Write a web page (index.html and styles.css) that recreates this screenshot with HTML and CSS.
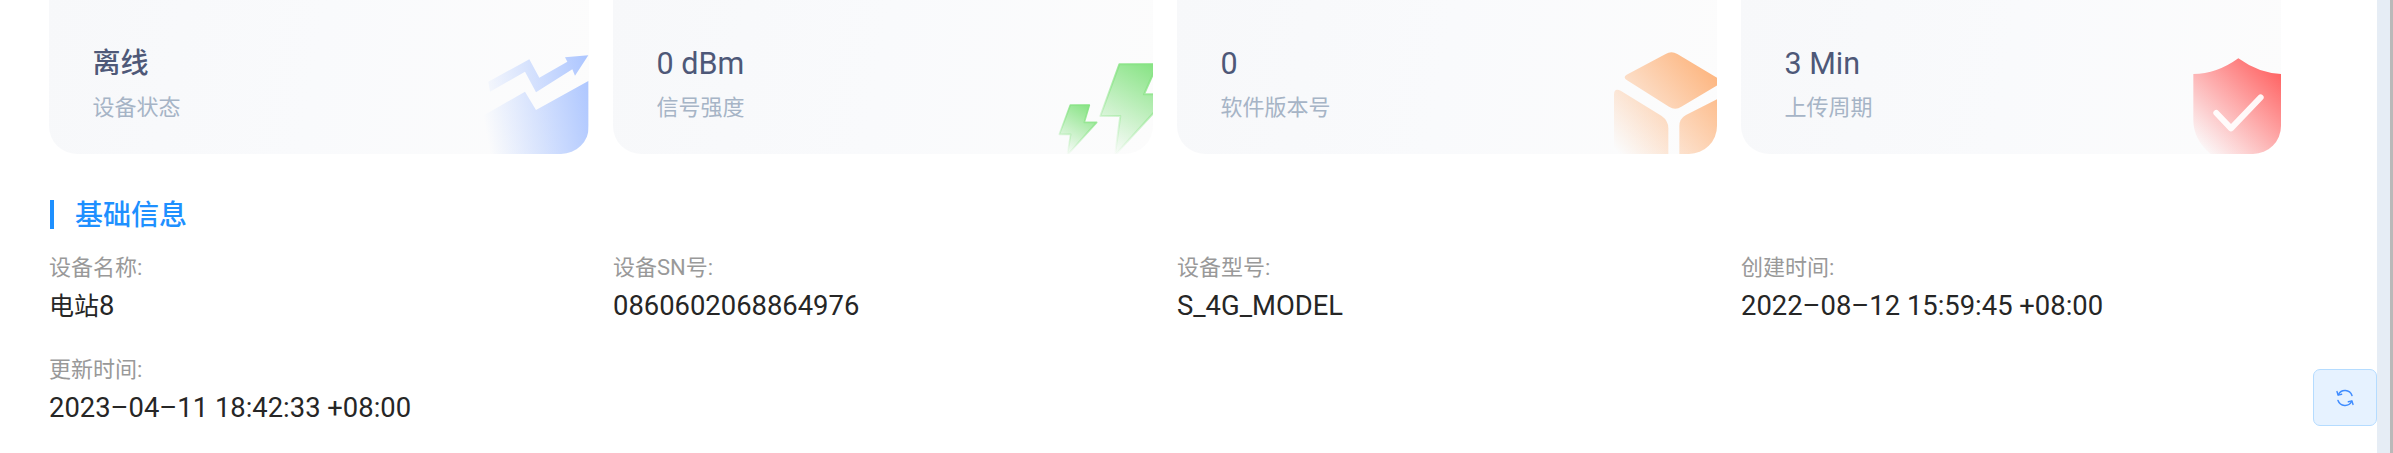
FILE: index.html
```html
<!DOCTYPE html>
<html lang="zh-CN">
<head>
<meta charset="utf-8">
<title>设备详情</title>
<link rel="stylesheet" href="styles.css">
</head>
<body>
<div class="page">
  <main class="content">
    <section class="cards">
      <article class="card">
        <div class="card-value cjk">离线</div>
        <div class="card-label">设备状态</div>
        <svg class="deco deco-trend" viewBox="0 0 420 390" aria-hidden="true">
          <defs><linearGradient id="gb" gradientUnits="userSpaceOnUse" x1="70" y1="260" x2="400" y2="200"><stop offset="0" stop-color="#adc6ff" stop-opacity="0"/><stop offset="1" stop-color="#adc6ff"/></linearGradient></defs>
          <path fill="url(#gb)" d="M85 155 208 88 238 143 322 95 315 82 385 76 345 137 337 118 228 187 195 125 90 185Z"/>
          <path fill="url(#gb)" d="M68 258 195 185 228 240 385 153V372H68Z"/>
        </svg>
      </article>
      <article class="card">
        <div class="card-value">0 dBm</div>
        <div class="card-label">信号强度</div>
        <svg class="deco deco-bolt" viewBox="0 0 420 330" aria-hidden="true">
          <defs>
            <linearGradient id="gg1" gradientUnits="userSpaceOnUse" x1="345" y1="45" x2="195" y2="300"><stop offset="0" stop-color="#86e383"/><stop offset="1" stop-color="#86e383" stop-opacity="0"/></linearGradient>
            <linearGradient id="gg2" gradientUnits="userSpaceOnUse" x1="150" y1="165" x2="70" y2="310"><stop offset="0" stop-color="#86e383"/><stop offset="1" stop-color="#86e383" stop-opacity="0"/></linearGradient>
          </defs>
          <path fill="url(#gg1)" stroke="url(#gg1)" stroke-width="6" stroke-linejoin="round" d="M238 43H352L312 133H392L225 315 241 198H181Z"/>
          <path fill="url(#gg2)" stroke="url(#gg2)" stroke-width="5" stroke-linejoin="round" d="M91 165H148L133 217H170L82 315 92 253H58Z"/>
        </svg>
      </article>
      <article class="card">
        <div class="card-value">0</div>
        <div class="card-label">软件版本号</div>
        <svg class="deco deco-cube" viewBox="0 0 420 360" aria-hidden="true">
          <defs><linearGradient id="go" gradientUnits="userSpaceOnUse" x1="350" y1="100" x2="60" y2="345"><stop offset="0" stop-color="#fdb57f"/><stop offset="1" stop-color="#fdb57f" stop-opacity="0"/></linearGradient></defs>
          <path fill="url(#go)" d="M197 42Q214 32 232 42L370 125 244 200Q226 212 207 200L80 120Q68 111 80 104Z"/>
          <path fill="url(#go)" d="M42 165Q42 142 62 152L185 228Q205 242 205 265V345H42Z"/>
          <path fill="url(#go)" d="M370 168 258 225Q238 236 238 258V345H370Z"/>
        </svg>
      </article>
      <article class="card">
        <div class="card-value">3 Min</div>
        <div class="card-label">上传周期</div>
        <svg class="deco deco-shield" viewBox="0 0 420 360" aria-hidden="true">
          <defs><linearGradient id="gr" gradientUnits="userSpaceOnUse" x1="335" y1="110" x2="105" y2="345"><stop offset="0" stop-color="#ff6666"/><stop offset="1" stop-color="#ff6666" stop-opacity="0"/></linearGradient></defs>
          <path fill="url(#gr)" d="M205 55Q270 102 340 102V240Q340 300 285 345H125Q70 300 70 240V102Q140 102 205 55Z"/>
          <path fill="none" stroke="#fff" stroke-opacity=".92" stroke-width="18" stroke-linecap="round" stroke-linejoin="round" d="M139 219 183 265 272 172"/>
        </svg>
      </article>
    </section>

    <h2 class="section-title">基础信息</h2>

    <section class="info">
      <div class="field"><div class="field-label">设备名称:</div><div class="field-value"><span class="cjk-inline">电站</span>8</div></div>
      <div class="field"><div class="field-label">设备SN号:</div><div class="field-value">0860602068864976</div></div>
      <div class="field"><div class="field-label">设备型号:</div><div class="field-value">S_4G_MODEL</div></div>
      <div class="field"><div class="field-label">创建时间:</div><div class="field-value">2022–08–12 15:59:45 +08:00</div></div>
      <div class="field"><div class="field-label">更新时间:</div><div class="field-value">2023–04–11 18:42:33 +08:00</div></div>
    </section>
  </main>
  <div class="scrollbar"><div class="scroll-track"></div><div class="scroll-thumb"></div></div>
  <button class="refresh" type="button" aria-label="刷新">
    <svg viewBox="0 0 16 16" width="20" height="20" fill="none" stroke="#3f8cff" stroke-width="1.2" stroke-linecap="round" stroke-linejoin="round" aria-hidden="true">
      <path d="M2.7 5.2A6 6 0 0 1 13.6 6"/>
      <path d="M13.3 10.8A6 6 0 0 1 2.4 10"/>
      <path d="M1.6 2.9 2.5 5.7 5.3 5" />
      <path d="M14.4 13.1 13.5 10.3 10.7 11"/>
    </svg>
  </button>
</div>
</body>
</html>
```

FILE: styles.css
```css
* { box-sizing: border-box; }
html, body { margin: 0; height: 100%; overflow: hidden; background: #fff; }
body { font-family: Roboto, "Noto Sans CJK SC", sans-serif; }

.page { position: relative; display: flex; height: 453px; overflow: hidden; }
.content { flex: 1; padding: 0 96px 0 49px; }

.cards { display: grid; grid-template-columns: repeat(4, 540px); gap: 24px; margin-top: -36px; }
.card {
  position: relative;
  height: 190px;
  padding: 80px 0 0 43.5px;
  border-radius: 28px;
  overflow: hidden;
  background: linear-gradient(100deg, #f7f8fa 0%, #f9fafc 50%, #fcfcfc 100%);
}
.card-value { font-size: 30.5px; line-height: 40px; color: #4e5878; }
.card-value.cjk { font-size: 28px; font-weight: 500; }
.card-label { margin-top: 9px; font-size: 22px; line-height: 30px; color: #a6b4c6; }

.deco { position: absolute; display: block; }
.deco-trend { right: -11px; bottom: -6px; width: 140px; height: 130px; }
.deco-bolt { right: -27px; bottom: -6px; width: 140px; height: 110px; }
.deco-cube { right: -23px; bottom: -6px; width: 140px; height: 120px; }
.deco-shield { right: -29px; bottom: -6px; width: 140px; height: 120px; }

.section-title {
  height: 29px;
  margin: 46px 0 0 1px;
  padding-left: 21px;
  border-left: 4px solid #1e90ff;
  font-size: 28px;
  line-height: 31px;
  font-weight: 500;
  color: #1e90ff;
}

.info { display: grid; grid-template-columns: repeat(4, 540px); column-gap: 24px; row-gap: 32px; margin-top: 24px; }
.field-label { font-size: 22px; line-height: 30px; color: #999; }
.field-value { margin-top: 7px; font-size: 27.4px; line-height: 32px; color: #262626; }
.cjk-inline { font-size: 25px; }

.scrollbar { display: flex; flex: none; width: 16px; }
.scroll-track { width: 13px; background: #e6edf5; }
.scroll-thumb { width: 3px; background: #b9b9b9; }

.refresh {
  position: absolute;
  left: 2313px;
  top: 369px;
  display: flex;
  align-items: center;
  justify-content: center;
  width: 64px;
  height: 57px;
  padding: 0;
  border: 1px solid #b5dcff;
  border-radius: 7px;
  background: #e6f2ff;
}
```
